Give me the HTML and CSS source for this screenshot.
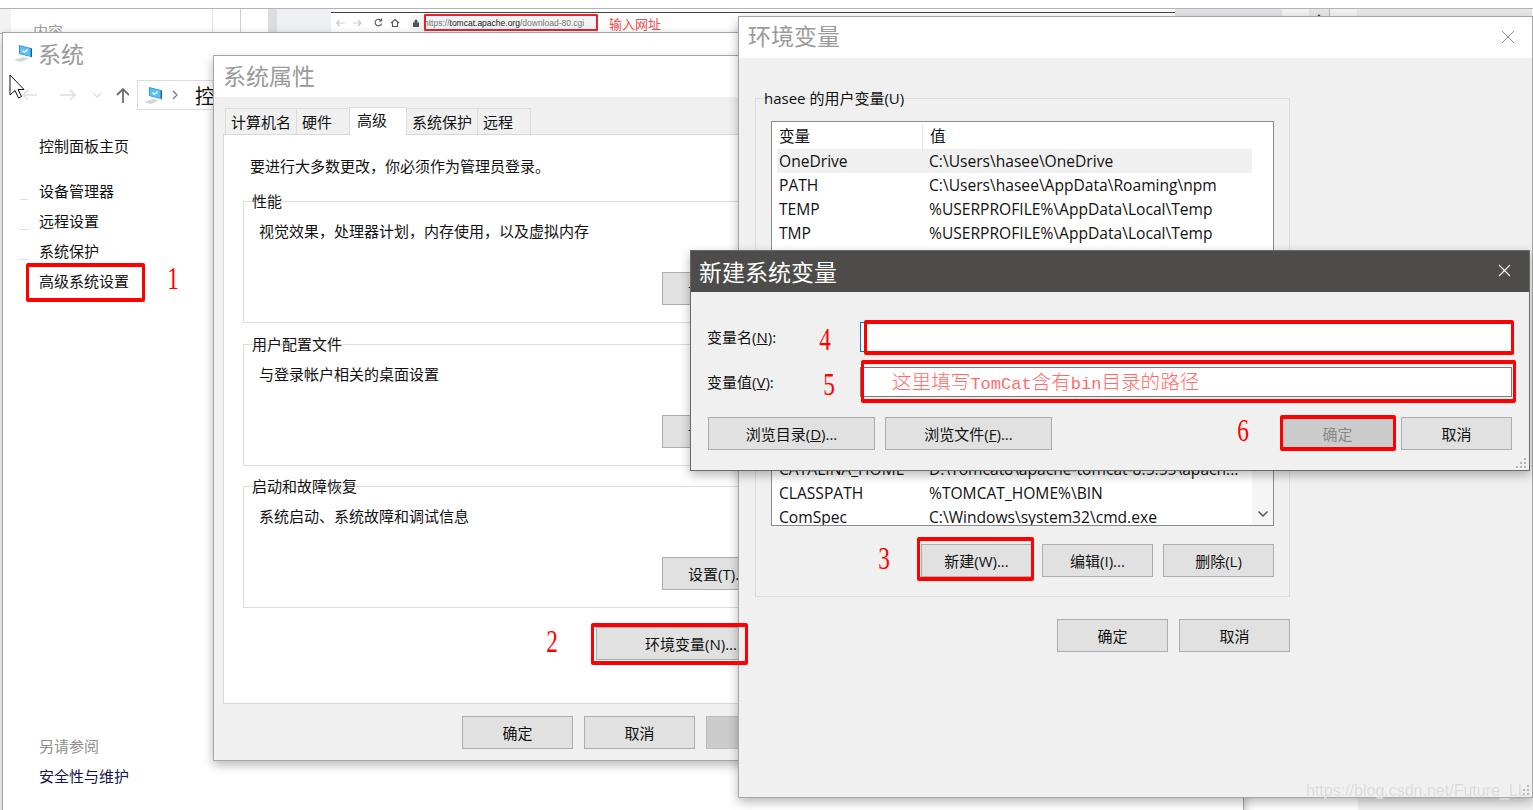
FILE: index.html
```html
<!DOCTYPE html>
<html lang="zh-CN">

<head>
    <meta charset="UTF-8">
    <title>新建系统变量</title>
    <link rel="stylesheet" href="styles.css">
</head>

<body>
    <svg class="defs" width="0" height="0">
        <symbol id="pc" viewBox="0 0 20 20">
            <path d="M1 17l9-3 6 1.500-8 3.500z" fill="#d5d5d5" />
            <path d="M6 2l12 3v9l-12-3z" fill="#2f9be8" />
            <path d="M7 3.200l10 2.500v7.200l-10-2.500z" fill="#5cc0f5" />
            <path d="M9.500 7.500l2 2 3-3" fill="none" stroke="#fff" stroke-width="1.200" />
            <path d="M18 5l1 .5v8.500l-1 .5z" fill="#1c5f94" />
        </symbol>
        <symbol id="grip" viewBox="0 0 10 10">
            <path d="M8 0h2v2h-2zM8 4h2v2h-2zM8 8h2v2h-2zM4 4h2v2h-2zM4 8h2v2h-2zM0 8h2v2h-2z" fill="#b5b5b5" />
        </symbol>
    </svg>

    <!-- what shows behind the windows -->
    <div class="backdrop">
        <div class="strip">
            <div class="seg seg-edge"></div>
            <div class="seg seg-content"><span class="content-label">内容</span></div>
            <div class="seg seg-a"></div>
            <div class="seg seg-b"></div>
            <div class="seg seg-c"></div>
            <div class="seg seg-d"></div>
            <div class="browser">
                <svg class="browser-nav" width="66" height="12" viewBox="0 0 66 12">
                    <path d="M8.500 6H.5M3.500 3L.5 6l3 3" fill="none" stroke="#c8c8c8" stroke-width="1.200" />
                    <path d="M17 6h8M22 3l3 3-3 3" fill="none" stroke="#c8c8c8" stroke-width="1.200" />
                    <path d="M45 3.500a3.300 3.300 0 1 0 .6 3M45.500 1.500v2.500h-2.500" fill="none" stroke="#555" stroke-width="1.100" />
                    <path d="M55 6l4-3.500 4 3.500M56.500 5.500v4h5v-4" fill="none" stroke="#555" stroke-width="1.100" />
                </svg>
                <div class="url-pill">
                    <svg width="6" height="8" viewBox="0 0 6 8"><path d="M0 3.500h6v4.500h-6zM1.500 3.500v-1.500a1.500 1.500 0 0 1 3 0v1.500" fill="#555" /></svg>
                    <span class="url">https://<b>tomcat.apache.org</b>/download-80.cgi</span>
                </div>
                <span class="url-note">输入网址</span>
            </div>
            <div class="seg seg-e"></div>
            <div class="seg seg-f"></div>
            <div class="seg seg-g"><span class="seg-arrow"></span></div>
            <div class="seg seg-h"></div>
            <div class="seg seg-i"></div>
        </div>
        <div class="backdrop-side"></div>
    </div>

    <!-- 系统 -->
    <section class="window win-system">
        <header class="system-title">
            <svg class="pc-icon" width="20" height="20"><use href="#pc" /></svg>
            <span>系统</span>
        </header>
        <div class="system-nav">
            <svg class="nav-arrows" width="112" height="20" viewBox="0 0 112 20">
                <path d="M20 10H6M11 5l-5 5 5 5" fill="none" stroke="#e0e0e0" stroke-width="1.500" />
                <path d="M43 10h15M53 5l5 5-5 5" fill="none" stroke="#e0e0e0" stroke-width="1.500" />
                <path d="M76 8l4 4 4-4" fill="none" stroke="#e0e0e0" stroke-width="1.500" />
                <path d="M106 18V4M100 10l6-6 6 6" fill="none" stroke="#6e6e6e" stroke-width="1.800" />
            </svg>
            <div class="address">
                <svg width="20" height="20"><use href="#pc" /></svg>
                <svg class="crumb" width="6" height="10" viewBox="0 0 6 10"><path d="M1 1l4 4-4 4" fill="none" stroke="#777" stroke-width="1.200" /></svg>
                <span class="address-text">控</span>
            </div>
        </div>
        <nav class="side">
            <a class="side-home">控制面板主页</a>
            <a class="side-first shield">设备管理器</a>
            <a class="shield">远程设置</a>
            <a class="shield">系统保护</a>
            <a>高级系统设置</a>
            <span class="side-heading">另请参阅</span>
            <a class="side-navy">安全性与维护</a>
        </nav>
    </section>

    <!-- 系统属性 -->
    <section class="window win-props">
        <header class="title">系统属性</header>
        <div class="props-body">
            <div class="tabs">
                <span class="tab">计算机名</span>
                <span class="tab tab-short">硬件</span>
                <span class="tab tab-on">高级</span>
                <span class="tab">系统保护</span>
                <span class="tab tab-short">远程</span>
            </div>
            <div class="panel">
                <p class="intro">要进行大多数更改，你必须作为管理员登录。</p>
                <div class="group props-group">
                    <span class="legend">性能</span>
                    <p class="group-text">视觉效果，处理器计划，内存使用，以及虚拟内存</p>
                    <div class="group-action"><button class="btn">设置(S)...</button></div>
                </div>
                <div class="group props-group">
                    <span class="legend">用户配置文件</span>
                    <p class="group-text">与登录帐户相关的桌面设置</p>
                    <div class="group-action"><button class="btn">设置(E)...</button></div>
                </div>
                <div class="group props-group props-group-last">
                    <span class="legend">启动和故障恢复</span>
                    <p class="group-text">系统启动、系统故障和调试信息</p>
                    <div class="group-action"><button class="btn">设置(T)...</button></div>
                </div>
                <button class="btn btn-env">环境变量(N)...</button>
            </div>
            <div class="btn-row props-actions">
                <button class="btn">确定</button>
                <button class="btn">取消</button>
                <button class="btn btn-off">应用(A)</button>
            </div>
        </div>
    </section>

    <!-- 环境变量 -->
    <section class="window win-env">
        <header class="title title-close">
            <span>环境变量</span>
            <svg width="14" height="14" viewBox="0 0 14 14"><path d="M1 1l12 12M13 1L1 13" stroke="#8a8a8a" stroke-width="1" /></svg>
        </header>
        <div class="env-body">
            <div class="group env-group">
                <span class="legend">hasee 的用户变量(U)</span>
                <div class="list">
                    <div class="list-rows">
                        <div class="row row-head"><span class="col-name">变量</span><span class="col-value">值</span></div>
                        <div class="row row-hover"><span class="col-name">OneDrive</span><span>C:\Users\hasee\OneDrive</span></div>
                        <div class="row"><span class="col-name">PATH</span><span>C:\Users\hasee\AppData\Roaming\npm</span></div>
                        <div class="row"><span class="col-name">TEMP</span><span>%USERPROFILE%\AppData\Local\Temp</span></div>
                        <div class="row"><span class="col-name">TMP</span><span>%USERPROFILE%\AppData\Local\Temp</span></div>
                        <div class="row-gap"></div>
                        <div class="row"><span class="col-name">CATALINA_HOME</span><span>D:\Tomcat8\apache-tomcat-8.5.55\apach...</span></div>
                        <div class="row"><span class="col-name">CLASSPATH</span><span>%TOMCAT_HOME%\BIN</span></div>
                        <div class="row"><span class="col-name">ComSpec</span><span>C:\Windows\system32\cmd.exe</span></div>
                    </div>
                    <div class="scrollbar">
                        <svg width="12" height="8" viewBox="0 0 12 8"><path d="M1.500 1.500L6 6l4.500-4.500" fill="none" stroke="#555" stroke-width="1.500" /></svg>
                    </div>
                </div>
                <div class="btn-row env-list-actions">
                    <button class="btn">新建(W)...</button>
                    <button class="btn">编辑(I)...</button>
                    <button class="btn">删除(L)</button>
                </div>
            </div>
            <div class="btn-row env-actions">
                <button class="btn">确定</button>
                <button class="btn">取消</button>
            </div>
        </div>
        <svg class="grip" width="10" height="10"><use href="#grip" /></svg>
    </section>

    <!-- 新建系统变量 -->
    <section class="window win-new">
        <header class="title-dark">
            <span>新建系统变量</span>
            <svg width="13" height="13" viewBox="0 0 13 13"><path d="M1 1l11 11M12 1L1 12" stroke="#fff" stroke-width="1.200" /></svg>
        </header>
        <div class="new-body">
            <div class="field">
                <label>变量名(<u>N</u>):</label>
                <div class="input input-focus"></div>
            </div>
            <div class="field field-value">
                <label>变量值(<u>V</u>):</label>
                <div class="input input-note">这里填写<span class="latin">TomCat</span>含有<span class="latin">bin</span>目录的路径</div>
            </div>
            <div class="new-actions">
                <button class="btn btn-wide">浏览目录(<u>D</u>)...</button>
                <button class="btn btn-wide">浏览文件(<u>F</u>)...</button>
                <button class="btn btn-off btn-ok">确定</button>
                <button class="btn">取消</button>
            </div>
        </div>
        <svg class="grip" width="10" height="10"><use href="#grip" /></svg>
    </section>

    <!-- the red notes drawn over the screenshot -->
    <div class="mark mark-url"></div>
    <div class="mark mark-1"></div>
    <div class="mark mark-2"></div>
    <div class="mark mark-3"></div>
    <div class="mark mark-4"></div>
    <div class="mark mark-5"></div>
    <div class="mark mark-6"></div>
    <span class="num num-1">1</span>
    <span class="num num-2">2</span>
    <span class="num num-3">3</span>
    <span class="num num-4">4</span>
    <span class="num num-5">5</span>
    <span class="num num-6">6</span>

    <!-- mouse pointer -->
    <svg class="cursor" width="16" height="25" viewBox="0 0 16 25">
        <path d="M1 1v20l5-4.500 3.500 7.500 3-1.500-3.500-7h6z" fill="#fff" stroke="#111" stroke-width="1" />
    </svg>

    <span class="watermark">https://blog.csdn.net/Future_LL</span>
</body>

</html>
```

FILE: styles.css
```css
/* page */
html,
body {
    margin: 0;
    height: 100%;
}

body {
    position: relative;
    width: 1533px;
    height: 810px;
    overflow: hidden;
    background: #fff;
    font-family: "Open Sans", "Noto Sans CJK SC", sans-serif;
    font-size: 15px;
    color: #111;
}

p {
    margin: 0;
}

.defs {
    position: absolute;
}

/* behind the windows */
.backdrop {
    position: absolute;
    inset: 0;
}

.strip {
    display: flex;
    height: 24px;
    margin-top: 8px;
    border-top: 1px solid #b4b4b4;
    border-bottom: 1px solid #b4b4b4;
    box-sizing: content-box;
}

.seg {
    height: 100%;
    flex: none;
    box-sizing: border-box;
}

.seg-edge {
    width: 11px;
    background: #f2f2f2;
}

.seg-content {
    width: 202px;
    padding: 11px 0 0 22px;
    border-right: 1px solid #e4e4e4;
    overflow: hidden;
}

.content-label {
    color: #a0a0a0;
    font-size: 15px;
}

.seg-a {
    width: 28px;
    border-right: 1px solid #cfcfcf;
}

.seg-b {
    width: 27px;
}

.seg-c {
    width: 9px;
    background: #dcdde2;
}

.seg-d {
    width: 54px;
    background: #eff0f3;
}

.browser {
    display: flex;
    align-items: center;
    flex: none;
    width: 844px;
    height: 100%;
    padding-top: 3px;
    box-sizing: border-box;
    background: linear-gradient(#444, #444) no-repeat 0 3px / 100% 1px, #fff;
}

.browser-nav {
    margin-left: 5px;
}

.url-pill {
    display: flex;
    align-items: center;
    gap: 5px;
    width: 190px;
    height: 16px;
    margin-left: 6px;
    padding-left: 5px;
    box-sizing: border-box;
    border-radius: 8px;
    background: #f1f3f4;
}

.url {
    font-family: "Liberation Sans", sans-serif;
    font-size: 8.5px;
    color: #777;
    white-space: nowrap;
}

.url b {
    font-weight: 400;
    color: #222;
}

.url-note {
    margin: 1px 0 0 11px;
    font-size: 13px;
    color: #f24a4a;
}

.seg-e {
    width: 107px;
    background: #e2e3e7;
}

.seg-f {
    width: 27px;
    background: #f2f2f2;
}

.seg-g {
    width: 21px;
    position: relative;
    background: #e6e6e6;
    border-right: 1px solid #b8b8b8;
}

.seg-arrow {
    position: absolute;
    left: 7px;
    top: 5px;
    border: 3px solid transparent;
    border-top: 0;
    border-bottom: 4px solid #444;
}

.seg-h {
    width: 27px;
    background: #f2f2f2;
}

.seg-i {
    width: 175px;
    background: #e8e8e8;
}

.backdrop-side {
    position: absolute;
    left: 1358px;
    right: 0;
    top: 33px;
    bottom: 0;
    background: #f0f0f0;
}

/* windows */
.window {
    position: absolute;
    box-sizing: border-box;
    background: #fff;
    border: 1px solid #a6a6a6;
    box-shadow: 0 4px 10px rgba(0, 0, 0, .28);
}

.title {
    height: 41px;
    padding-left: 9px;
    box-sizing: border-box;
    font-size: 23px;
    line-height: 41px;
    color: #9a9a9a;
    background: #fff;
}

.title-close {
    display: flex;
    justify-content: space-between;
    align-items: center;
    padding-right: 17px;
    padding-bottom: 2px;
}

.btn {
    width: 111px;
    height: 33px;
    padding: 0;
    flex: none;
    box-sizing: border-box;
    border: 1px solid #adadad;
    background: #e1e1e1;
    font: inherit;
    color: #111;
}

.btn-off {
    background: #cccccc;
    border-color: #bcbcbc;
    color: #8a8a8a;
}

.btn-row {
    display: flex;
}

.group {
    position: relative;
    box-sizing: border-box;
    border: 1px solid #dcdcdc;
}

.legend {
    position: absolute;
    left: 8px;
    top: -11px;
    line-height: 20px;
    padding-right: 2px;
}

.grip {
    position: absolute;
    right: 3px;
    bottom: 2px;
}

/* 系统 */
.win-system {
    left: 2px;
    top: 32px;
    width: 1242px;
    height: 800px;
}

.system-title {
    display: flex;
    align-items: center;
    gap: 5px;
    height: 46px;
    padding: 0 0 7px 10px;
    box-sizing: border-box;
    font-size: 23px;
    color: #9a9a9a;
}

.pc-icon {
    margin-top: 1px;
}

.system-nav {
    display: flex;
    align-items: center;
    height: 32px;
    padding-left: 14px;
}

.nav-arrows {
    flex: none;
}

.address {
    display: flex;
    align-items: center;
    gap: 7px;
    width: 300px;
    height: 30px;
    margin-left: 8px;
    padding-left: 5px;
    box-sizing: border-box;
    border: 1px solid #dcdcdc;
}

.crumb {
    margin: 0 10px 0 2px;
}

.address-text {
    font-size: 20px;
    white-space: nowrap;
}

.side {
    display: flex;
    flex-direction: column;
    align-items: flex-start;
    padding: 20px 0 0 36px;
}

.side a,
.side-heading {
    position: relative;
    line-height: 30px;
}

.side-first {
    margin-top: 15px;
}

.shield::before {
    content: "";
    position: absolute;
    left: -19px;
    top: 23px;
    width: 8px;
    height: 1px;
    background: #dcdcdc;
}

.side-heading {
    margin-top: 435px;
    color: #8f8f8f;
}

.side-navy {
    color: #14144a;
}

/* 系统属性 */
.win-props {
    left: 213px;
    top: 55px;
    width: 615px;
    height: 706px;
}

.props-body {
    height: 663px;
    padding: 11px 10px 0 9px;
    box-sizing: border-box;
    background: #f0f0f0;
}

.tabs {
    display: flex;
    align-items: flex-end;
    height: 26px;
    padding-left: 2px;
}

.tab {
    height: 26px;
    padding: 0 5px;
    margin-right: -1px;
    box-sizing: border-box;
    line-height: 27px;
    border: 1px solid #dcdcdc;
    border-bottom: 0;
}

.tab-short {
    width: 54px;
    padding-left: 5px;
}

.tab-on {
    position: relative;
    width: 58px;
    height: 28px;
    margin-bottom: -1px;
    padding-left: 7px;
    line-height: 24px;
    background: #fff;
}

.panel {
    height: 570px;
    padding: 19px 20px 0 19px;
    box-sizing: border-box;
    background: #fff;
    border: 1px solid #d9d9d9;
}

.intro {
    padding-left: 7px;
    line-height: 24px;
}

.props-group {
    height: 122px;
    margin-top: 21px;
}

.props-group-last {
    margin-top: 20px;
}

.intro + .props-group {
    margin-top: 23px;
}

.group-text {
    padding: 17px 0 0 15px;
    line-height: 24px;
}

.group-action {
    display: flex;
    justify-content: flex-end;
    padding: 29px 22px 0 0;
}

.btn-env {
    display: block;
    width: 190px;
    margin: 19px 0 0 353px;
}

.props-actions {
    justify-content: flex-end;
    gap: 11px;
    margin-top: 12px;
}

/* 环境变量 */
.win-env {
    left: 738px;
    top: 16px;
    width: 795px;
    height: 782px;
}

.env-body {
    height: 739px;
    padding: 40px 0 0 16px;
    box-sizing: border-box;
    background: #f0f0f0;
}

.env-group {
    width: 535px;
    height: 499px;
    padding: 22px 15px 0;
}

.list {
    display: flex;
    height: 405px;
    padding-left: 5px;
    box-sizing: border-box;
    overflow: hidden;
    background: #fff;
    border: 1px solid #8c8c8c;
}

.list-rows {
    width: 475px;
    flex: none;
}

.row {
    display: flex;
    align-items: center;
    height: 24px;
    padding-left: 2px;
    font-size: 15.6px;
    white-space: nowrap;
}

.row-head {
    align-items: stretch;
    height: 27px;
    padding-top: 2px;
    box-sizing: border-box;
    line-height: 24px;
}

.row-hover {
    background: #f0f0f0;
}

.row-gap {
    height: 212px;
}

.col-name {
    width: 150px;
    flex: none;
}

.col-value {
    margin-left: -7px;
    padding-left: 7px;
    border-left: 1px solid #e6e6e6;
}

.scrollbar {
    display: flex;
    flex: 1;
    justify-content: center;
    align-items: flex-end;
    padding-bottom: 7px;
    background: linear-gradient(#fff 345px, #f5f5f5 345px);
}

.env-list-actions {
    justify-content: flex-end;
    gap: 10px;
    margin-top: 18px;
}

.env-actions {
    justify-content: flex-end;
    gap: 11px;
    width: 535px;
    margin-top: 22px;
}

/* 新建系统变量 */
.win-new {
    left: 690px;
    top: 250px;
    width: 840px;
    height: 221px;
    background: #f0f0f0;
    border-color: #6a6a6a;
}

.title-dark {
    display: flex;
    justify-content: space-between;
    align-items: center;
    height: 41px;
    padding: 0 18px 2px 8px;
    box-sizing: border-box;
    font-size: 23px;
    color: #fff;
    background: #4d4c4a;
}

.new-body {
    padding: 30px 17px 0 17px;
}

.field {
    display: flex;
    align-items: center;
}

.field-value {
    margin-top: 15px;
}

.field label {
    width: 153px;
    flex: none;
    margin: -2px 0 0 -1px;
}

.input {
    flex: 1;
    height: 30px;
    box-sizing: border-box;
    background: #fff;
    border: 1px solid #7a7a7a;
}

.input-focus {
    border-color: #0078d7;
}

.input-note {
    padding-left: 31px;
    font-size: 19.6px;
    font-weight: 300;
    line-height: 27px;
    color: #ff6b6b;
    white-space: nowrap;
}

.latin {
    font-family: "Liberation Mono", monospace;
    font-size: 17px;
}

.new-actions {
    display: flex;
    margin-top: 20px;
}

.btn-wide {
    width: 167px;
    margin-right: 10px;
}

.btn-ok {
    width: 113px;
    margin: 0 7px 0 auto;
}

/* red notes */
.mark {
    position: absolute;
    box-sizing: border-box;
    border: solid #fe0000;
    border-width: 4px 3px;
    border-radius: 2px;
}

.mark-url {
    left: 424px;
    top: 14px;
    width: 174px;
    height: 17px;
    border: 2px solid #e8202a;
    border-radius: 1px;
}

.mark-1 {
    left: 26px;
    top: 263px;
    width: 119px;
    height: 39px;
}

.mark-2 {
    left: 591px;
    top: 623px;
    width: 157px;
    height: 42px;
}

.mark-3 {
    left: 917px;
    top: 537px;
    width: 117px;
    height: 44px;
}

.mark-4 {
    left: 864px;
    top: 320px;
    width: 650px;
    height: 35px;
}

.mark-5 {
    left: 861px;
    top: 360px;
    width: 655px;
    height: 43px;
}

.mark-6 {
    left: 1280px;
    top: 415px;
    width: 116px;
    height: 36px;
}

.num {
    position: absolute;
    width: 20px;
    font-family: "Liberation Serif", serif;
    font-size: 31px;
    line-height: 30px;
    text-align: center;
    color: #f00;
    transform: scaleX(.75);
}

.num-1 {
    left: 163px;
    top: 264px;
}

.num-2 {
    left: 542px;
    top: 627px;
}

.num-3 {
    left: 874px;
    top: 544px;
}

.num-4 {
    left: 815px;
    top: 325px;
}

.num-5 {
    left: 819px;
    top: 370px;
}

.num-6 {
    left: 1233px;
    top: 416px;
}

.cursor {
    position: absolute;
    left: 9px;
    top: 74px;
}

.watermark {
    position: absolute;
    left: 1306px;
    top: 781px;
    font-family: "Liberation Sans", sans-serif;
    font-size: 16px;
    line-height: 20px;
    color: #d9d9d9;
    text-shadow: 0 0 1px #fff;
    white-space: nowrap;
}
```
